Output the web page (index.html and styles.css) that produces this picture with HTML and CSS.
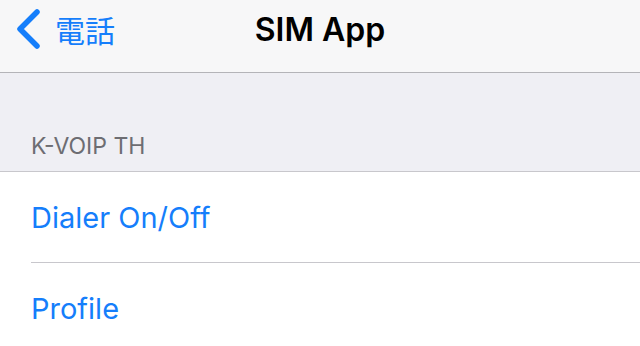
FILE: index.html
```html
<!DOCTYPE html>
<html lang="ja">
<head>
    <meta charset="UTF-8">
    <meta name="viewport" content="width=device-width, initial-scale=1.0">
    <title>SIM App</title>
    <link rel="stylesheet" href="styles.css">
</head>
<body>

<!-- Barra di navigazione -->
<div class="navbar">
    <a class="back-button" href="#">
        <svg class="chevron" width="30" height="44" viewBox="0 0 30 44">
            <path d="M24 5 L7 22 L24 39" fill="none" stroke="#157efb" stroke-width="5.5" stroke-linecap="round" stroke-linejoin="round"/>
        </svg>
        <span class="back-label">電話</span>
    </a>
    <div class="nav-title">SIM App</div>
</div>

<div class="section-header">K-VOIP TH</div>

<div class="table">
    <div class="cell">Dialer On/Off</div>
    <div class="cell">Profile</div>
</div>

</body>
</html>
```

FILE: styles.css
```css
body {
    font-family: Inter, "Noto Sans CJK JP", sans-serif;
    background-color: #efeff4;
    margin: 0;
    padding: 0;
    overflow: hidden;
}

.navbar {
    position: relative;
    height: 73px;
    box-sizing: border-box;
    padding-top: 14px;
    background-color: #f7f7f8;
    border-bottom: 1px solid #b4b4b8;
    display: flex;
    align-items: flex-start;
    justify-content: center;
}

.back-button {
    position: absolute;
    left: 13px;
    top: 7px;
    display: flex;
    align-items: center;
    text-decoration: none;
    color: #157efb;
}

.chevron {
    display: block;
}

.back-label {
    font-size: 30px;
    line-height: 30px;
    margin-left: 12px;
    font-family: "Noto Sans CJK JP", sans-serif;
}

.nav-title {
    font-size: 32px;
    line-height: 32px;
    font-weight: 600;
    color: #000;
}

.section-header {
    height: 99px;
    box-sizing: border-box;
    padding: 0 31px 11px;
    display: flex;
    align-items: flex-end;
    font-size: 23px;
    color: #6d6d72;
    border-bottom: 1px solid #c8c7cc;
}

.table {
    background-color: #fff;
}

.cell {
    height: 90px;
    margin-left: 31px;
    display: flex;
    align-items: center;
    font-size: 29px;
    color: #157efb;
    border-bottom: 1px solid #c8c7cc;
}
```
